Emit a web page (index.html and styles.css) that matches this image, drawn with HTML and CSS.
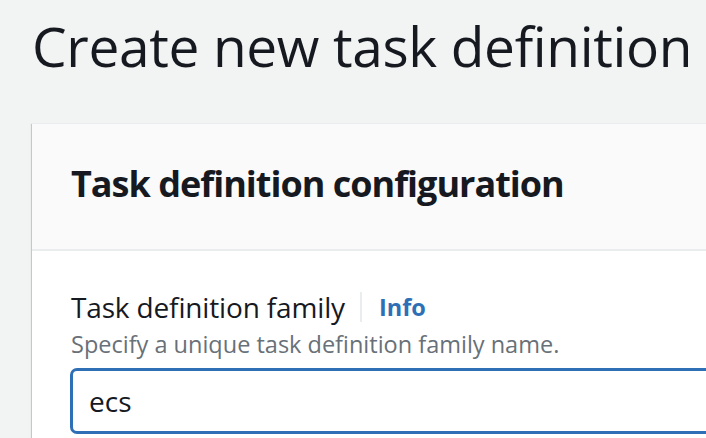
FILE: index.html
```html
<!DOCTYPE html>
<html lang="en">
<head>
<meta charset="utf-8">
<title>Create new task definition</title>
<link rel="stylesheet" href="styles.css">
</head>
<body>
<main class="page">
  <h1 class="page-title">Create new task definition</h1>
  <section class="card">
    <header class="card-header">
      <h2 class="card-title">Task definition configuration</h2>
    </header>
    <div class="card-body">
      <div class="field">
        <div class="label-row">
          <label class="label" for="family">Task definition family</label>
          <span class="divider"></span>
          <a class="info" href="#">Info</a>
        </div>
        <p class="description">Specify a unique task definition family name.</p>
        <input class="input" id="family" type="text" value="ecs">
      </div>
    </div>
  </section>
</main>
</body>
</html>
```
FILE: styles.css
```css
html, body {
  margin: 0;
  padding: 0;
  background: #f2f3f3;
  overflow: hidden;
  font-family: "Open Sans", "Noto Sans", sans-serif;
  color: #16191f;
}
.page {
  padding: 18px 0 0 32px;
}
.page-title {
  margin: 0;
  font-size: 55px;
  line-height: 55px;
  font-weight: 450;
  letter-spacing: -0.35px;
  color: #16191f;
  white-space: nowrap;
}
.card {
  margin-top: 50px;
  width: 760px;
  background: #ffffff;
  box-shadow: 0 1px 1px 0 rgba(0, 28, 36, 0.3), 1px 1px 1px 0 rgba(0, 28, 36, 0.15), -1px 1px 1px 0 rgba(0, 28, 36, 0.15);
}
.card-header {
  background: #fafafa;
  border-top: 1px solid #eaeded;
  border-bottom: 2px solid #eaeded;
  padding: 42px 0 47px 39px;
}
.card-title {
  margin: 0;
  font-size: 36px;
  line-height: 36px;
  font-weight: 700;
  letter-spacing: -1px;
  color: #16191f;
}
.card-body {
  padding: 41px 0 20px 39px;
}
.label-row {
  display: flex;
  align-items: center;
}
.label {
  font-size: 28px;
  line-height: 28px;
  letter-spacing: -0.15px;
  color: #16191f;
}
.divider {
  width: 2px;
  height: 30px;
  background: #eaeded;
  margin: 0 17px 0 15px;
}
.info {
  font-size: 23.5px;
  line-height: 28px;
  font-weight: 700;
  color: #2f6fb5;
  text-decoration: none;
}
.description {
  margin: 8px 0 0;
  font-size: 23.5px;
  line-height: 28px;
  color: #687078;
}
.input {
  display: block;
  box-sizing: border-box;
  margin: 10px 0 0 -1px;
  width: 700px;
  height: 66px;
  padding: 0 0 0 16px;
  border: 3px solid #2f6fb5;
  border-radius: 7px;
  font-family: inherit;
  font-size: 28px;
  color: #16191f;
  background: #ffffff;
  outline: none;
}
```
